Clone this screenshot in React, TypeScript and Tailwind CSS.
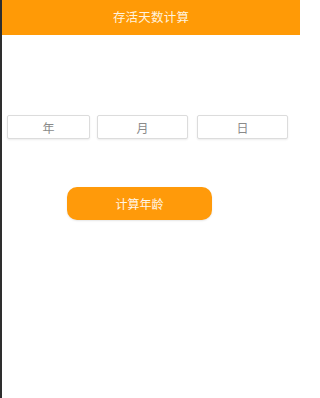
import React, { useState } from 'react';

const font = { fontFamily: '"Noto Sans CJK SC", "Noto Sans", sans-serif' };

const App: React.FC = () => {
  const [year, setYear] = useState('');
  const [month, setMonth] = useState('');
  const [day, setDay] = useState('');

  const inputClass =
    'h-[24px] border border-[#dcdcdc] rounded-[2px] bg-white text-center text-[12px] text-[#333] placeholder:text-[#8a8a8a] outline-none shadow-[0_1px_2px_rgba(0,0,0,0.08)]';

  return (
    <div className="w-[300px] h-[398px] flex bg-white overflow-hidden" style={font}>
      <div className="w-[2px] bg-[#2e2e2e] shrink-0" />
      <div className="flex-1 flex flex-col">
        <div className="h-[35px] bg-[#ff9a06] flex items-center justify-center">
          <span className="text-[12.5px] text-[#fff3df] tracking-[0.2px]">存活天数计算</span>
        </div>

        <div className="mt-[80px] flex pl-[5px]">
          <input value={year} onChange={e => setYear(e.target.value)} placeholder="年" className={`${inputClass} w-[83px]`} />
          <input value={month} onChange={e => setMonth(e.target.value)} placeholder="月" className={`${inputClass} w-[91px] ml-[7px]`} />
          <input value={day} onChange={e => setDay(e.target.value)} placeholder="日" className={`${inputClass} w-[91px] ml-[9px]`} />
        </div>

        <div className="mt-[48px] pl-[65px]">
          <button className="w-[145px] h-[33px] rounded-[10px] bg-[#ff9a0a] text-[12px] text-[#fff6e8] shadow-[0_1px_2px_rgba(0,0,0,0.1)]">
            计算年龄
          </button>
        </div>
      </div>
    </div>
  );
};

export default App;
